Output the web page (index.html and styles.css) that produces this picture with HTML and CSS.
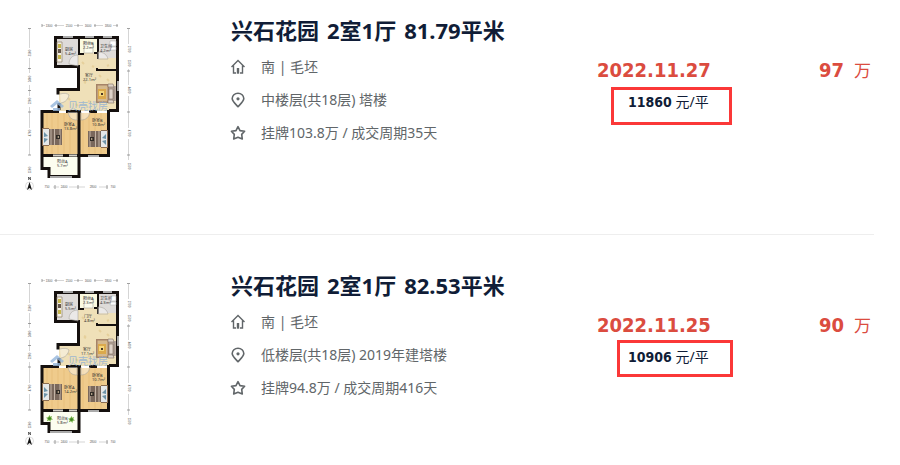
FILE: index.html
```html
<!DOCTYPE html>
<html lang="zh-CN">
<head>
<meta charset="utf-8">
<title>兴石花园 成交记录</title>
<link rel="stylesheet" href="styles.css">
</head>
<body>
<svg class="defs" aria-hidden="true">
  <symbol id="home" viewBox="0 0 16 16"><path d="M1.500 8 8 1.500 14.500 8M3.500 6.500V14H6M12.500 6.500V14H10" fill="none" stroke="currentColor" stroke-width="1.400"/><path d="M6.800 9h2.400v5.700H6.800z" fill="currentColor"/></symbol>
  <symbol id="pin" viewBox="0 0 16 16"><path d="M8 14.600C5.500 12 2.200 9.500 2.200 6.600a5.800 5.400 0 0 1 11.600 0C13.800 9.500 10.500 12 8 14.600z" fill="none" stroke="currentColor" stroke-width="1.600"/><circle cx="8" cy="6.800" r="1.600" fill="currentColor"/></symbol>
  <symbol id="star" viewBox="0 0 16 16"><path d="M8 1.600 10 5.600 14.600 6.300 11.700 9.400 12.300 14 8 12.300 3.700 14 4.300 9.400 1.400 6.300 6 5.600z" fill="none" stroke="currentColor" stroke-width="1.600" stroke-linejoin="round"/></symbol>
  <symbol id="plant" viewBox="0 0 8 8"><path d="M4 0 5 2 7 1 6 3.500 8 5 5.500 5.500 5 8 3.500 6 1 7 2 4.500 0 3 2.500 2.500z" fill="#6eae3d"/><circle cx="4" cy="4" r="1.500" fill="#3e7d22"/></symbol>
  <symbol id="bed" viewBox="0 0 21 18">
    <path d="M0 0h7v18H0z" fill="#8b6c50"/><path d="M1 1h6v16H1z" fill="#e6e8e8"/><path d="M2 4l4 4-4 1zM2 10l4 1-4 4z" fill="#6d93a8"/>
    <path d="M7 1h13v16H7z" fill="#7a685c"/>
    <path d="M9 1v16M12.500 1v16M18 1v16" stroke="#c3b4a6"/><path d="M14 7h4v4h-4z" fill="#302b26"/><path d="M15 9l2-1v2z" fill="#d8c4a5"/>
  </symbol>
</svg>
<main class="listings">
  <article class="card">
    <svg class="floorplan" viewBox="0 0 130 185" role="img" aria-label="户型图">
      <g id="plan">
        <path d="M41 28h61v73H44V81h20V57H41z" fill="#efe0b8"/>
        <path d="M41 28h22v28H41zM83 28h19v20H83z" fill="#dedbd9"/>
        <path d="M65 28h17v15H65z" fill="#fbfae0"/>
        <path d="M67 52l2 2m8 2 2 1m5 8 2 2m-17 5 2 1m10 7 2 1m-30 7 2 2m6 4 2 2m10-5 3 1m-7-21 2 1m21-3 2 2m-2-15 2-1" stroke="#e6d09c" stroke-width="2"/>
        <path d="M28 103h66v43H28z" fill="#efcb8c"/>
        <path d="M32 103v42m5-42v42m6-42v42m6-42v42m6-42v42m13-42v42m6-42v42m6-42v42m6-42v42" stroke="#deb26e" stroke-width=".5"/>
        <path d="M28 147h36v19H34v-8h-6z" fill="#fcfdef"/>
        <g fill="none" stroke="#15100e">
          <path d="M41 27.500h61.500v73H94M40.500 26v30.500h23v23H43v5M44 93v7M27 159V101.500h17M51 101.500h15M74 101.500h8M93.500 100v45.500H27M64 101v67M27 145v13.500h7v8h30.500" stroke-width="3"/>
          <path d="M64 28v16h5M79 43h4M83 28v21M82 58v2h20" stroke-width="2"/>
        </g>
        <path d="M48 27h10m12 0h9m9 0h9M103 71v10M73 146h11M35 167h22" stroke="#aaa" stroke-width="2"/>
        <path d="M54 145.500h8M38 145.500h10" stroke="#d4d1c8" stroke-width="2"/>
        <path d="M63 45c-6 0-9 4-9 9l9 2zM83 42c6 0 9 3 10 7H83zM45 84c4-1 7-1 9 1-1 4-3 7-8 8M53 102c1 6 4 8 9 8v-8M66 102v8c5 0 8-3 9-8M69 43h9V33h-9z" fill="#fff" fill-opacity=".4" stroke="#aaa69f" stroke-width=".6"/>
        <path d="M42 32h5v20h-5z" fill="#f6f1e7" stroke="#8c8069" stroke-width=".7"/><path d="M43 34h3v4h-3zM43 45h3v4h-3z" fill="#c6b64d"/><path d="M43 39h3v4h-3z" fill="#65574c"/>
        <path d="M95 31h6v5h-6zM96 37h5v3h-6z" fill="#fff" stroke="#aaa" stroke-width=".5"/>
        <path d="M81 74h13v19H81z" fill="#a58368"/><path d="M82.500 75.500h10v16h-10z" fill="#d5b98e"/><path d="M83 79h8v10h-8z" fill="#dba94c"/><path d="M84 81h5v5h-5z" fill="#f4d77c"/><path d="M86 83h2v2h-2z" fill="#473426"/>
        <path d="M94 76h7v15h-7z" fill="#b8aaa0"/><path d="M93 74h5l1 3h-6zM93 90h5l1 3h-6zM94 79h4v10h-4zM99 77v14" fill="#ded3c9" stroke="#806e62" stroke-width=".6"/>
        <use href="#bed" x="27" y="118" width="21" height="18"/>
        <use href="#bed" transform="translate(93 120) scale(-1 1)" width="21" height="18"/>
        <path class="rule" d="M27 15.500h3M39 15.500h10M59 15.500h9M79 15.500h9M98 15.500h5M14.500 19v19M14.500 48v15M14.500 75v11M14.500 97v21M14.500 129v16M14.500 167v2M113.500 19v15M113.500 59v16M113.500 86v32M113.500 129v21M38 177h6M54 177h16M84 177h9"/>
        <path d="M27 14v3M41 14v3M63 14v3M80 14v3M102 14v3M13 18.500h3M13 58.500h3M13 80.500h3M13 102h3M13 145h3M112 18.500h3M112 61h3M112 102h3M112 145h3M40 175v4M63 175v4M92 175v4" stroke="#777" stroke-width=".7"/>
        <circle cx="14.500" cy="176" r="4" fill="#fff" stroke="#bbb" stroke-width=".5"/><path d="M12 180l2.500-8 2.500 8-2.500-2z" fill="#111"/><path d="M13.500 170v-3l2 3v-3" stroke="#222" stroke-width=".6" fill="none"/>
        <g class="dims"><text x="34" y="17">1300</text><text x="54" y="17">2100</text><text x="73" y="17">1600</text><text x="93" y="17">1800</text><text x="32" y="178">750</text><text x="49" y="178">2400</text><text x="78" y="178">2800</text><text x="98" y="178">700</text>
        <text transform="translate(16 43) rotate(-90)">3100</text><text transform="translate(16 69) rotate(-90)">2400</text><text transform="translate(16 91) rotate(-90)">2200</text><text transform="translate(16 123) rotate(-90)">4700</text><text transform="translate(16 160) rotate(-90)">1500</text><text transform="translate(113 39) rotate(90)">2700</text><text transform="translate(113 53) rotate(90)">1500</text><text transform="translate(113 80) rotate(90)">4400</text><text transform="translate(113 123) rotate(90)">4700</text><text transform="translate(113 156) rotate(90)">1500</text></g>
        <path d="M35 96l7-6 7 6-2 2-5-4-5 4zM38 98v3h7v-3" fill="#93b5db" opacity=".8"/><text x="53" y="100" class="watermark">贝壳找房</text>
      </g>
      <g class="rooms"><text x="50" y="41">厨房</text><text x="50" y="45">5.4m²</text><text x="68" y="35">阳台B</text><text x="68" y="39">2.2m²</text><text x="85" y="38">卫生间</text><text x="85" y="42">4.2m²</text><text x="70" y="67">客厅</text><text x="68" y="71">22.1m²</text><text x="49" y="116">卧室A</text><text x="49" y="120">13.8m²</text><text x="77" y="112">卧室B</text><text x="77" y="116">10.8m²</text><text x="42" y="153">阳台A</text><text x="42" y="157">5.7m²</text></g>
    </svg>
    <div class="info">
      <h2 class="title"><span>兴石花园</span> <span>2室1厅</span> <span>81.79平米</span></h2>
      <ul class="facts">
        <li><svg class="icon" aria-hidden="true"><use href="#home"/></svg>南 | 毛坯</li>
        <li><svg class="icon" aria-hidden="true"><use href="#pin"/></svg>中楼层(共18层) 塔楼</li>
        <li><svg class="icon" aria-hidden="true"><use href="#star"/></svg>挂牌103.8万 / 成交周期35天</li>
      </ul>
    </div>
    <div class="deal">
      <time class="date" datetime="2022-11-27">2022.11.27</time>
      <p class="unit"><strong>11860</strong> 元/平<span class="mark mark-tall"></span></p>
    </div>
    <p class="total"><strong>97</strong><span>万</span></p>
  </article>
  <article class="card">
    <svg class="floorplan" viewBox="0 0 130 185" role="img" aria-label="户型图">
      <use href="#plan"/>
      <use href="#plant" x="31" y="150" width="7" height="7"/><use href="#plant" x="53" y="151" width="7" height="7"/>
      <g class="rooms"><text x="50" y="41">厨房</text><text x="50" y="45">5.5m²</text><text x="68" y="35">阳台A</text><text x="68" y="39">2.3m²</text><text x="85" y="35">卫生间</text><text x="85" y="39">4.3m²</text><text x="69" y="53">门厅</text><text x="69" y="57">4.8m²</text><text x="68" y="86">客厅</text><text x="66" y="90">17.1m²</text><text x="49" y="124">卧室A</text><text x="49" y="128">14.2m²</text><text x="77" y="112">卧室B</text><text x="77" y="116">10.7m²</text><text x="42" y="155">阳台B</text><text x="42" y="159">5.8m²</text></g>
    </svg>
    <div class="info">
      <h2 class="title"><span>兴石花园</span> <span>2室1厅</span> <span>82.53平米</span></h2>
      <ul class="facts">
        <li><svg class="icon" aria-hidden="true"><use href="#home"/></svg>南 | 毛坯</li>
        <li><svg class="icon" aria-hidden="true"><use href="#pin"/></svg>低楼层(共18层) 2019年建塔楼</li>
        <li><svg class="icon" aria-hidden="true"><use href="#star"/></svg>挂牌94.8万 / 成交周期416天</li>
      </ul>
    </div>
    <div class="deal">
      <time class="date" datetime="2022-11-25">2022.11.25</time>
      <p class="unit"><strong>10906</strong> 元/平<span class="mark"></span></p>
    </div>
    <p class="total"><strong>90</strong><span>万</span></p>
  </article>
</main>
</body>
</html>
```
FILE: styles.css
```css
* { box-sizing: border-box; }
body {
  margin: 0;
  background: #fff;
  color: #616669;
  font: 14px/20px "Noto Sans", "Noto Sans CJK SC", sans-serif;
}
h2, p, ul { margin: 0; padding: 0; }
.defs { position: absolute; width: 0; height: 0; }
.listings { display: grid; gap: 20px; padding-right: 26px; }
.card {
  display: flex;
  align-items: flex-start;
  padding: 10px 3px 39px 15px;
  border-bottom: 1px solid #eee;
}
.card:last-child { padding-bottom: 0; border-bottom: 0; }
.floorplan { flex: none; width: 130px; height: 185px; margin-right: 85px; }
.info { flex: 1; padding-top: 6px; }
.title {
  display: flex;
  gap: 8px;
  margin-bottom: 13px;
  padding-left: 1px;
  color: #101d37;
  font-size: 22px;
  line-height: 28px;
  white-space: nowrap;
}
.facts { display: grid; gap: 13px; list-style: none; }
.facts li { display: flex; align-items: center; gap: 15px; white-space: nowrap; }
.icon { width: 16px; height: 16px; color: #616669; }
.deal { width: 222px; padding-top: 46px; }
.date, .total strong {
  color: #db4c3f;
  font: bold 20px/28px "DejaVu Sans Condensed", "DejaVu Sans", sans-serif;
}
.date { display: block; }
.unit { position: relative; margin: 8px 0 0 31px; color: #101d37; }
.unit strong { font-family: "DejaVu Sans Condensed", "DejaVu Sans", sans-serif; }
.mark {
  position: absolute;
  top: -7px;
  left: -11px;
  width: 116px;
  height: 37px;
  border: 3px solid #fb3838;
}
.mark-tall { top: -5px; left: -17px; width: 121px; height: 38px; }
.total {
  display: flex;
  align-items: baseline;
  justify-content: space-between;
  width: 52px;
  padding-top: 46px;
  color: #db4c3f;
}
.total span { font-size: 17px; line-height: 28px; }
.rule { fill: none; stroke: #aaa; stroke-width: 0.5px; }
.dims { fill: #555; font: 3px "Liberation Sans", sans-serif; text-anchor: middle; }
.rooms { fill: #333; font-size: 4px; }
.watermark { fill: #8dafd5; font-size: 10px; opacity: 0.8; }
```
